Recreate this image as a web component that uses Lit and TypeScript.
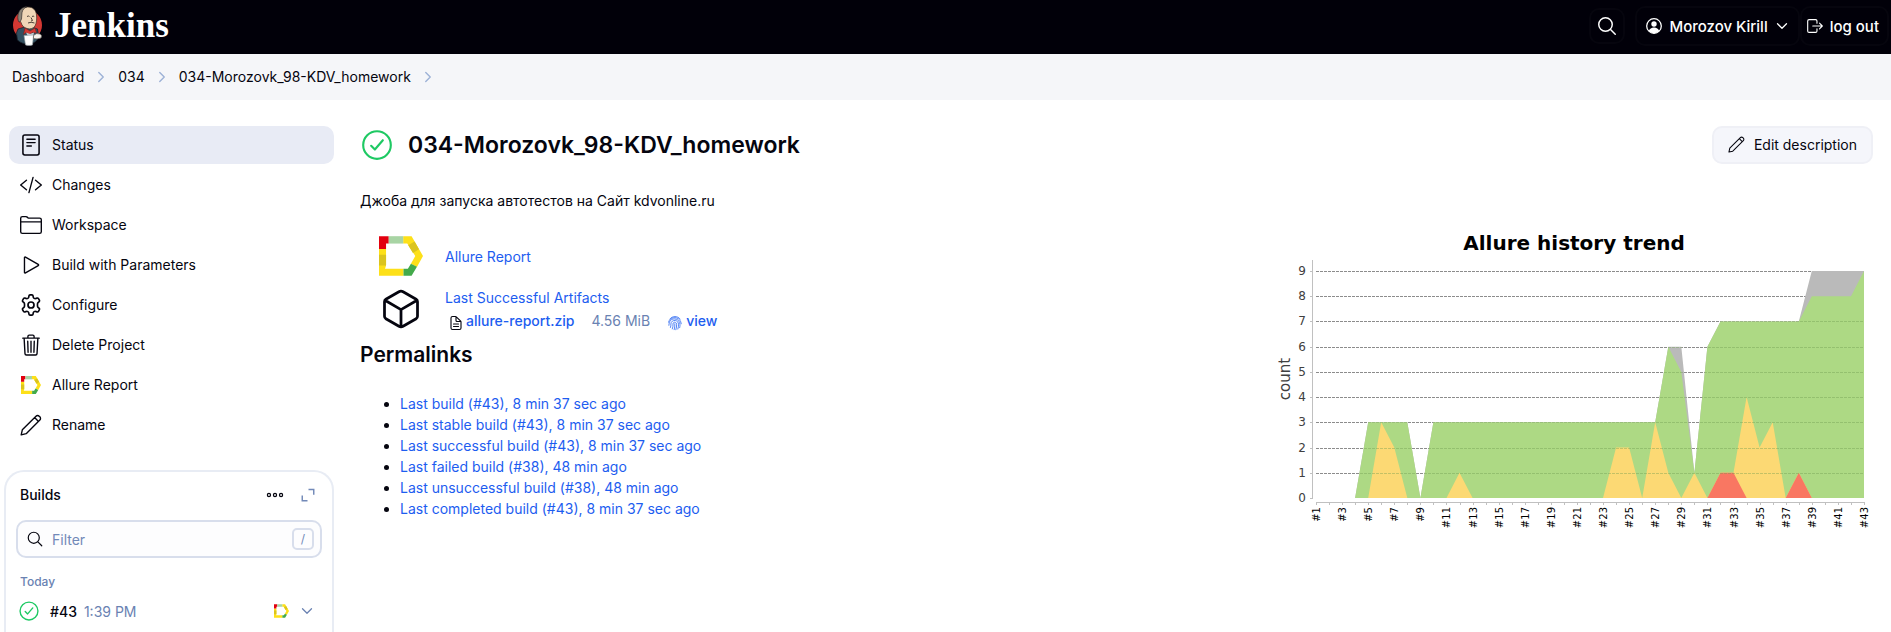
import { LitElement, html, svg, css, nothing } from "lit";
import { customElement, property } from "lit/decorators.js";

const SANS = css`Inter, "Noto Sans", sans-serif`;

const stroke = (d: string, width = 32) =>
  svg`<path d=${d} fill="none" stroke="currentColor" stroke-width=${width} stroke-linecap="round" stroke-linejoin="round"></path>`;

const ICONS: Record<string, unknown> = {
  status: svg`${stroke("M112 24h288a44 44 0 0 1 44 44v376a44 44 0 0 1-44 44H112a44 44 0 0 1-44-44V68a44 44 0 0 1 44-44z", 36)}${stroke("M160 122h192M160 200h192M160 278h104")}`,
  code: stroke("M150 368L16 256l134-112M362 368l134-112-134-112M304 80l-96 352"),
  folder: stroke("M456 452H56a40 40 0 0 1-40-40V100a40 40 0 0 1 40-40h80a40 40 0 0 1 22 7l30 22a40 40 0 0 0 22 7h246a40 40 0 0 1 40 40v276a40 40 0 0 1-40 40zM16 184h480"),
  play: stroke("M104 84v344c0 14 12 20 24 13l296-170c12-7 12-23 0-30L128 71c-12-7-24-1-24 13z"),
  gear: svg`${stroke("M326 256a70 70 0 1 1-140 0 70 70 0 0 1 140 0z", 40)}${stroke("M208 44q4-24 26-24h44q22 0 26 24l4 28q4 20 22 30t38 4l28-10q22-8 34 12l22 38q11 20-7 34l-22 18q-16 12-16 34v48q0 22 16 34l22 18q18 14 7 34l-22 38q-12 20-34 12l-28-10q-20-6-38 4t-22 30l-4 28q-4 24-26 24h-44q-22 0-26-24l-4-28q-4-20-22-30t-38-4l-28 10q-22 8-34-12l-22-38q-11-20 7-34l22-18q16-12 16-34v-48q0-22-16-34l-22-18q-18-14-7-34l22-38q12-20 34-12l28 10q20 6 38-4t22-30z", 38)}`,
  trash: stroke("M96 96l20 360c1 20 14 34 32 34h216c18 0 31-14 32-34l20-360M64 96h384M184 96V56a30 30 0 0 1 30-30h84a30 30 0 0 1 30 30v40M256 168v256M180 168l8 256M332 168l-8 256"),
  pencil: stroke("M28 484l26-116L372 50a52 52 0 0 1 74 0l16 16a52 52 0 0 1 0 74L144 458zM340 82l90 90"),
  cube: stroke("M448 341V171a32 32 0 0 0-16-28L280 55a48 48 0 0 0-48 0L80 143a32 32 0 0 0-16 28v170a32 32 0 0 0 16 28l152 88a48 48 0 0 0 48 0l152-88a32 32 0 0 0 16-28zM69 154l187 110 187-110M256 464V264"),
  document: stroke("M416 221v195a48 48 0 0 1-48 48H144a48 48 0 0 1-48-48V96a48 48 0 0 1 48-48h99a32 32 0 0 1 22 9l142 142a32 32 0 0 1 9 22zM256 56v120a32 32 0 0 0 32 32h120M176 288h160M176 368h160", 36),
  fingerprint: stroke("M90 130C170 20 340 20 422 130M50 230C80 70 300 40 400 150q50 60 56 130M60 330C70 180 130 130 240 126c110 0 176 80 176 190q0 50-10 90M110 400q20-60 14-110c0-150 240-160 244 10q4 70-20 150M170 446q30-80 22-160c0-80 116-70 116 10q4 80-24 176M252 280q4 110-22 190", 24),
  search: stroke("M221 64a157 157 0 1 0 157 157A157 157 0 0 0 221 64zM338 338l110 110", 34),
  user: svg`<circle cx="256" cy="256" r="208" fill="none" stroke="currentColor" stroke-width="36"></circle><circle cx="256" cy="200" r="76" fill="currentColor"></circle><path d="M256 300c-70 0-130 36-146 92 34 42 86 70 146 70s112-28 146-70c-16-56-76-92-146-92z" fill="currentColor"></path>`,
  logout: stroke("M312 336v60a40 40 0 0 1-40 40H88a40 40 0 0 1-40-40V116a40 40 0 0 1 40-40h184a40 40 0 0 1 40 40v60M384 176l80 80-80 80M192 256h268"),
  down: stroke("M112 184l144 144 144-144", 40),
  right: stroke("M184 112l144 144-144 144", 44),
  check: svg`${stroke("M464 256a208 208 0 1 1-416 0 208 208 0 0 1 416 0z")}${stroke("M344 184L224 324l-56-56")}`,
  dots: svg`<g fill="none" stroke="currentColor" stroke-width="36"><circle cx="256" cy="256" r="44"></circle><circle cx="428" cy="256" r="44"></circle><circle cx="84" cy="256" r="44"></circle></g>`,
  expand: svg`<path d="M272 80h168v168M72 272v168h168" fill="none" stroke="currentColor" stroke-width="46"></path>`,
};

const ALLURE = svg`
  <path fill="#fde019" d="M72 0h25l34 59-18 33-18-10 13-23-24-37H72zM0 38h21v49l-3 10h55v21H0z"></path>
  <path fill="#dbc41e" d="M106 16l13 23-18 11-14-23zM0 55h21v32H0z"></path>
  <path fill="#e2000f" d="M0 0h29v22h-8v16H0z"></path>
  <path fill="#a8d4a4" d="M29 0h43v22H29z"></path>
  <path fill="#43aa4b" d="M113 91l-16 27H73V97h13l9-15z"></path>`;

@customElement("ui-icon")
export class UiIcon extends LitElement {
  @property() name = "";
  static styles = css`
    :host { display: inline-flex; flex: none; width: 22px; height: 22px; }
    svg { width: 100%; height: 100%; display: block; }
  `;
  render() {
    return this.name === "allure"
      ? html`<svg viewBox="0 0 131 118" aria-hidden="true">${ALLURE}</svg>`
      : html`<svg viewBox="0 0 512 512" aria-hidden="true">${ICONS[this.name] ?? nothing}</svg>`;
  }
}

/* Stacked series, one value for each build. */
const pick = (fallback: number, set: Record<number, number>) =>
  Array.from({ length: 43 }, (_, i) => set[i + 1] ?? fallback);
const total = pick(3, { 1: 0, 2: 0, 3: 0, 4: 0, 9: 0, 28: 6, 29: 6, 30: 1, 31: 6, 32: 7, 33: 7, 34: 7, 35: 7, 36: 7, 37: 7, 38: 7, 39: 9, 40: 9, 41: 9, 42: 9, 43: 9 });
const passed = total.map((v, i) => (i === 28 ? 5 : i >= 38 && i <= 41 ? 8 : v));
const broken = pick(0, { 6: 3, 7: 2, 12: 1, 24: 2, 25: 2, 27: 3, 28: 1, 30: 1, 32: 1, 33: 1, 34: 4, 35: 2, 36: 3, 38: 1 });
const failed = pick(0, { 32: 1, 33: 1, 38: 1 });

const LEFT = 43;
const RIGHT = 591;
const TOP = 43;
const BASE = 270;
const px = (i: number) => LEFT + (i * (RIGHT - LEFT)) / 42;
const py = (v: number) => BASE - (v * (BASE - TOP)) / 9;
const area = (values: number[]) =>
  `M${LEFT} ${BASE}` + values.map((v, i) => `L${px(i).toFixed(1)} ${py(v).toFixed(1)}`).join("") + `L${RIGHT} ${BASE}Z`;

@customElement("trend-chart")
export class TrendChart extends LitElement {
  static styles = css`
    :host { display: block; }
    svg { display: block; width: 100%; }
    text { font-family: "DejaVu Sans", sans-serif; }
    .title { font-size: 20px; font-weight: 700; text-anchor: middle; }
    .axis { font-size: 15px; fill: #404040; text-anchor: middle; }
    .value { font-size: 12px; fill: #404040; text-anchor: end; }
    .build { font-size: 10px; text-anchor: end; }
    .line { stroke: #c0c0c0; fill: none; }
    .grid { stroke: #8c8c8c; stroke-dasharray: 3 1; shape-rendering: crispEdges; }
    .over { stroke: #6f9a50; stroke-opacity: 0.4; stroke-dasharray: 3 1; shape-rendering: crispEdges; }
  `;
  render() {
    const rows = Array.from({ length: 10 }, (_, v) => v);
    return html`
      <svg viewBox="0 0 600 320" role="img" aria-label="Allure history trend">
        <defs><clipPath id="filled"><path d=${area(total)}></path></clipPath></defs>
        <text class="title" x="301" y="22">Allure history trend</text>
        ${rows.slice(1).map((v) => svg`<line class="grid" x1=${LEFT} x2=${RIGHT} y1=${Math.round(py(v)) + 0.5} y2=${Math.round(py(v)) + 0.5}></line>`)}
        <path fill="#bababa" d=${area(total)}></path>
        <path fill="#add984" d=${area(passed)}></path>
        <path fill="#fcd974" d=${area(broken)}></path>
        <path fill="#f97762" d=${area(failed)}></path>
        <g clip-path="url(#filled)">
          ${rows.slice(1, 8).map((v) => svg`<line class="over" x1=${LEFT} x2=${RIGHT} y1=${Math.round(py(v)) + 0.5} y2=${Math.round(py(v)) + 0.5}></line>`)}
        </g>
        <path class="line" d="M39.5 32V270.5M${LEFT} 274.5H${RIGHT + 1}"></path>
        ${rows.map((v) => svg`<path class="line" d="M37 ${Math.round(py(v)) + 0.5}h3"></path><text class="value" x="33" y=${Math.round(py(v)) + 4}>${v}</text>`)}
        ${total.map((_, i) => svg`<path class="line" d="M${Math.round(px(i)) + 0.5} 274v3"></path>${i % 2 ? nothing : svg`<text class="build" transform="translate(${Math.round(px(i)) + 4} 279) rotate(-90)">#${i + 1}</text>`}`)}
        <text class="axis" transform="translate(17 151) rotate(-90)">count</text>
      </svg>`;
  }
}

const TASKS = [
  ["status", "Status"], ["code", "Changes"], ["folder", "Workspace"], ["play", "Build with Parameters"],
  ["gear", "Configure"], ["trash", "Delete Project"], ["allure", "Allure Report"], ["pencil", "Rename"],
];

const PERMALINKS = [
  "Last build (#43), 8 min 37 sec ago",
  "Last stable build (#43), 8 min 37 sec ago",
  "Last successful build (#43), 8 min 37 sec ago",
  "Last failed build (#38), 48 min ago",
  "Last unsuccessful build (#38), 48 min ago",
  "Last completed build (#43), 8 min 37 sec ago",
];

@customElement("app-root")
export class AppRoot extends LitElement {
  static styles = css`
    :host { display: flex; flex-direction: column; min-height: 100vh; background: #fff; color: #05050f; font: 14px/21px ${SANS}; }
    * { box-sizing: border-box; }
    a { color: inherit; text-decoration: none; }
    button { font: inherit; color: inherit; background: none; border: 0; padding: 0; display: flex; align-items: center; cursor: pointer; }
    h1, h2, p, ul, ol { margin: 0; padding: 0; }
    ol { list-style: none; }

    header { display: flex; align-items: center; justify-content: space-between; height: 54px; padding: 0 2px 2px 12px; background: #010009; color: #fff; }
    .brand { display: flex; align-items: center; gap: 11px; font: 700 35px/40px "Liberation Serif", serif; }
    .brand svg { width: 31px; height: 40px; }
    .tools { display: flex; align-items: center; font-size: 15px; font-weight: 500; }
    .tools > * { display: flex; align-items: center; gap: 6px; height: 40px; padding: 0 8px; border: 2px solid #06050e; border-radius: 10px; }
    .tools .find { width: 36px; height: 36px; justify-content: center; padding: 0; margin-right: 10px; }
    .tools ui-icon { width: 18px; height: 18px; }
    .tools .find ui-icon { width: 22px; height: 22px; }
    .tools .caret { width: 16px; height: 16px; }
    .tools a { padding: 0 8px 0 4px; }

    .crumbs ol { display: flex; align-items: center; height: 46px; padding: 0 12px 1px; background: #f5f6f9; }
    .crumbs li { display: flex; align-items: center; }
    .crumbs ui-icon { width: 16px; height: 16px; margin: 0 9px; color: #9db1d6; }

    .body { flex: 1; display: flex; gap: 26px; padding: 26px 18px 0 4px; }
    aside { width: 330px; flex: none; display: flex; flex-direction: column; gap: 26px; }
    .tasks { display: flex; flex-direction: column; gap: 2px; padding-left: 5px; }
    .task { display: flex; align-items: center; gap: 10px; height: 38px; padding: 0 11px 1px; border-radius: 10px; }
    .task.on { background: #e8ebf5; }
    .task .allure { width: 20px; height: 18px; margin: 0 1px; }

    .builds { flex: 1; border: 2px solid #e8ecf4; border-bottom: 0; border-radius: 20px 20px 0 0; padding: 8px 10px 0; }
    .bar { display: flex; align-items: center; height: 30px; padding: 0 4px 1px; font-weight: 500; }
    .bar .more { margin-left: auto; }
    .bar .more ui-icon { width: 18px; height: 18px; }
    .bar .open { margin: 0 2px 0 16px; color: #7289b8; }
    .bar .open ui-icon { width: 16px; height: 16px; }
    .filter { display: flex; align-items: center; gap: 8px; height: 38px; margin-top: 10px; padding: 0 6px 0 8px; border: 2px solid #d8deec; border-radius: 10px; background: #fdfdfe; }
    .filter ui-icon { width: 18px; height: 18px; }
    .filter input { flex: 1; min-width: 0; border: 0; outline: 0; padding: 0; background: none; font: inherit; }
    .filter input::placeholder { color: #7289b8; opacity: 1; }
    kbd { width: 22px; height: 22px; border: 2px solid #d8deec; border-radius: 5px; font: 12px/18px ${SANS}; text-align: center; color: #7289b8; }
    .day { margin-top: 14px; padding: 0 4px; font-size: 12px; line-height: 20px; font-weight: 500; color: #6a82b2; }
    .build { display: flex; align-items: center; height: 20px; margin-top: 9px; padding: 0 4px; font-weight: 500; }
    .build time { margin-left: 7px; font-weight: 400; color: #6a82b2; }
    .build .ok { width: 22px; height: 22px; margin: 0 10px 0 -2px; }
    .build .allure { width: 15px; height: 14px; margin-left: auto; }
    .build button { margin-left: 10px; margin-right: 3px; color: #6a82b2; }
    .build button ui-icon { width: 16px; height: 16px; }
    .ok { color: #1ec963; }

    main { flex: 1; min-width: 0; }
    .head { display: flex; align-items: center; justify-content: space-between; height: 38px; }
    h1 { display: flex; align-items: center; gap: 14px; font-size: 23px; line-height: 32px; font-weight: 600; }
    h1 ui-icon { width: 34px; height: 34px; }
    .edit { gap: 9px; height: 38px; padding: 0 14px 1px; border: 2px solid #eff0f6; border-radius: 10px; background: #f5f6fb; }
    .edit ui-icon { width: 17px; height: 17px; }
    .about { margin-top: 26px; }
    .cols { display: flex; justify-content: space-between; gap: 24px; margin-top: 17px; }
    .row { display: flex; align-items: center; gap: 22px; padding-left: 19px; }
    .row > ui-icon { width: 44px; height: 40px; }
    .row.pack { margin-top: 9px; }
    .row.pack > ui-icon { height: 48px; }
    .link { color: #1d5df0; }
    .report { margin-top: 8px; }
    .file { display: flex; align-items: center; margin-top: 2px; }
    .file a { display: flex; align-items: center; gap: 3px; font-weight: 500; }
    .file ui-icon { width: 16px; height: 16px; margin-top: 4px; }
    .file .doc { margin: 4px 2px 0 3px; color: #05050f; }
    .file span { margin: 0 17px; color: #6a82b2; }
    h2 { margin-top: 8px; font-size: 21px; line-height: 28px; font-weight: 600; }
    .perma { margin-top: 24px; padding-left: 40px; }
    trend-chart { width: 600px; flex: 0 1 600px; }
  `;

  render() {
    return html`
      <header>
        <a class="brand" href="#">
          <svg viewBox="0 0 31 40" aria-hidden="true">
            <ellipse cx="15.500" cy="19" rx="14.500" ry="15" fill="#d33833"></ellipse>
            <path d="M6 23l-1.500 4 1 7c3 3 7 4 12 4 5-1 8-3 9-8l-1-7-9-3z" fill="#335061" stroke="#1b2630" stroke-width=".8"></path>
            <path d="M7 9C8 3 12 1 16 1c5 0 8 3 8.500 8 .5 4 0 8-1.500 11-1.500 2.500-5 3.500-8 2.500-3-1-5-2.500-6-6C7 15 6 12 7 9z" fill="#f0d6b7" stroke="#3b2e25" stroke-width=".7"></path>
            <path d="M7 16C5 13 5.500 6 9 3c2-1.700 4-2.300 6-2.200-3 1.200-4.500 3-5 6L9.500 13 8 16z" fill="#8c8478" stroke="#231f20" stroke-width=".6"></path>
            <path d="M15 10.500q1.500-1 2.500 0M20 10.500q1.200-.8 2.200 0M19 11.500l1.500 3-1.500.5M16 17q3-1.500 6.500 0" fill="none" stroke="#3a302a" stroke-width=".9"></path>
            <path d="M13 22l5 3 5-3 1.500 5-4-.5-3 2-3.500-2-2.500 2z" fill="#d33833" stroke="#7c1713" stroke-width=".5"></path>
            <path d="M14 26.500l4 1.500 4-1.500-1 4h-5z" fill="#c9d3d9"></path>
            <path d="M12 29.500l9.500-.5-1 10q-3.500 1-7 0z" fill="#fff" stroke="#8c979e" stroke-width=".6"></path>
            <path d="M21.500 29.500q3-3 6.500-1.500 2.500 1.500 1 4-4 1.500-7.500.5z" fill="#f5f1ec" stroke="#635e58" stroke-width=".7"></path>
          </svg>
          Jenkins
        </a>
        <div class="tools">
          <button class="find" aria-label="Search"><ui-icon name="search"></ui-icon></button>
          <button><ui-icon name="user"></ui-icon>Morozov Kirill<ui-icon class="caret" name="down"></ui-icon></button>
          <a href="#"><ui-icon name="logout"></ui-icon>log out</a>
        </div>
      </header>
      <nav class="crumbs" aria-label="Breadcrumbs">
        <ol>
          ${["Dashboard", "034", "034-Morozovk_98-KDV_homework"].map((t) => html`<li><a href="#">${t}</a><ui-icon name="right"></ui-icon></li>`)}
        </ol>
      </nav>
      <div class="body">
        <aside>
          <nav class="tasks" aria-label="Project">
            ${TASKS.map(([icon, label], i) => html`<a class="task ${i ? "" : "on"}" href="#"><ui-icon class=${icon} name=${icon}></ui-icon>${label}</a>`)}
          </nav>
          <section class="builds">
            <div class="bar">
              Builds
              <button class="more" aria-label="More actions"><ui-icon name="dots"></ui-icon></button>
              <button class="open" aria-label="Expand"><ui-icon name="expand"></ui-icon></button>
            </div>
            <label class="filter">
              <ui-icon name="search"></ui-icon>
              <input type="text" placeholder="Filter" aria-label="Filter builds" />
              <kbd>/</kbd>
            </label>
            <p class="day">Today</p>
            <div class="build">
              <ui-icon class="ok" name="check"></ui-icon><a href="#">#43</a><time>1:39 PM</time>
              <ui-icon class="allure" name="allure"></ui-icon>
              <button aria-label="Build menu"><ui-icon name="down"></ui-icon></button>
            </div>
          </section>
        </aside>
        <main>
          <div class="head">
            <h1><ui-icon class="ok" name="check"></ui-icon>034-Morozovk_98-KDV_homework</h1>
            <button class="edit"><ui-icon name="pencil"></ui-icon>Edit description</button>
          </div>
          <p class="about">Джоба для запуска автотестов на Сайт kdvonline.ru</p>
          <div class="cols">
            <div>
              <div class="row report"><ui-icon name="allure"></ui-icon><a class="link" href="#">Allure Report</a></div>
              <div class="row pack">
                <ui-icon name="cube"></ui-icon>
                <div>
                  <a class="link" href="#">Last Successful Artifacts</a>
                  <div class="file">
                    <ui-icon class="doc" name="document"></ui-icon><a class="link" href="#">allure-report.zip</a>
                    <span>4.56 MiB</span>
                    <a class="link" href="#"><ui-icon name="fingerprint"></ui-icon>view</a>
                  </div>
                </div>
              </div>
              <h2>Permalinks</h2>
              <ul class="perma">
                ${PERMALINKS.map((t) => html`<li><a class="link" href="#">${t}</a></li>`)}
              </ul>
            </div>
            <trend-chart></trend-chart>
          </div>
        </main>
      </div>
    `;
  }
}
